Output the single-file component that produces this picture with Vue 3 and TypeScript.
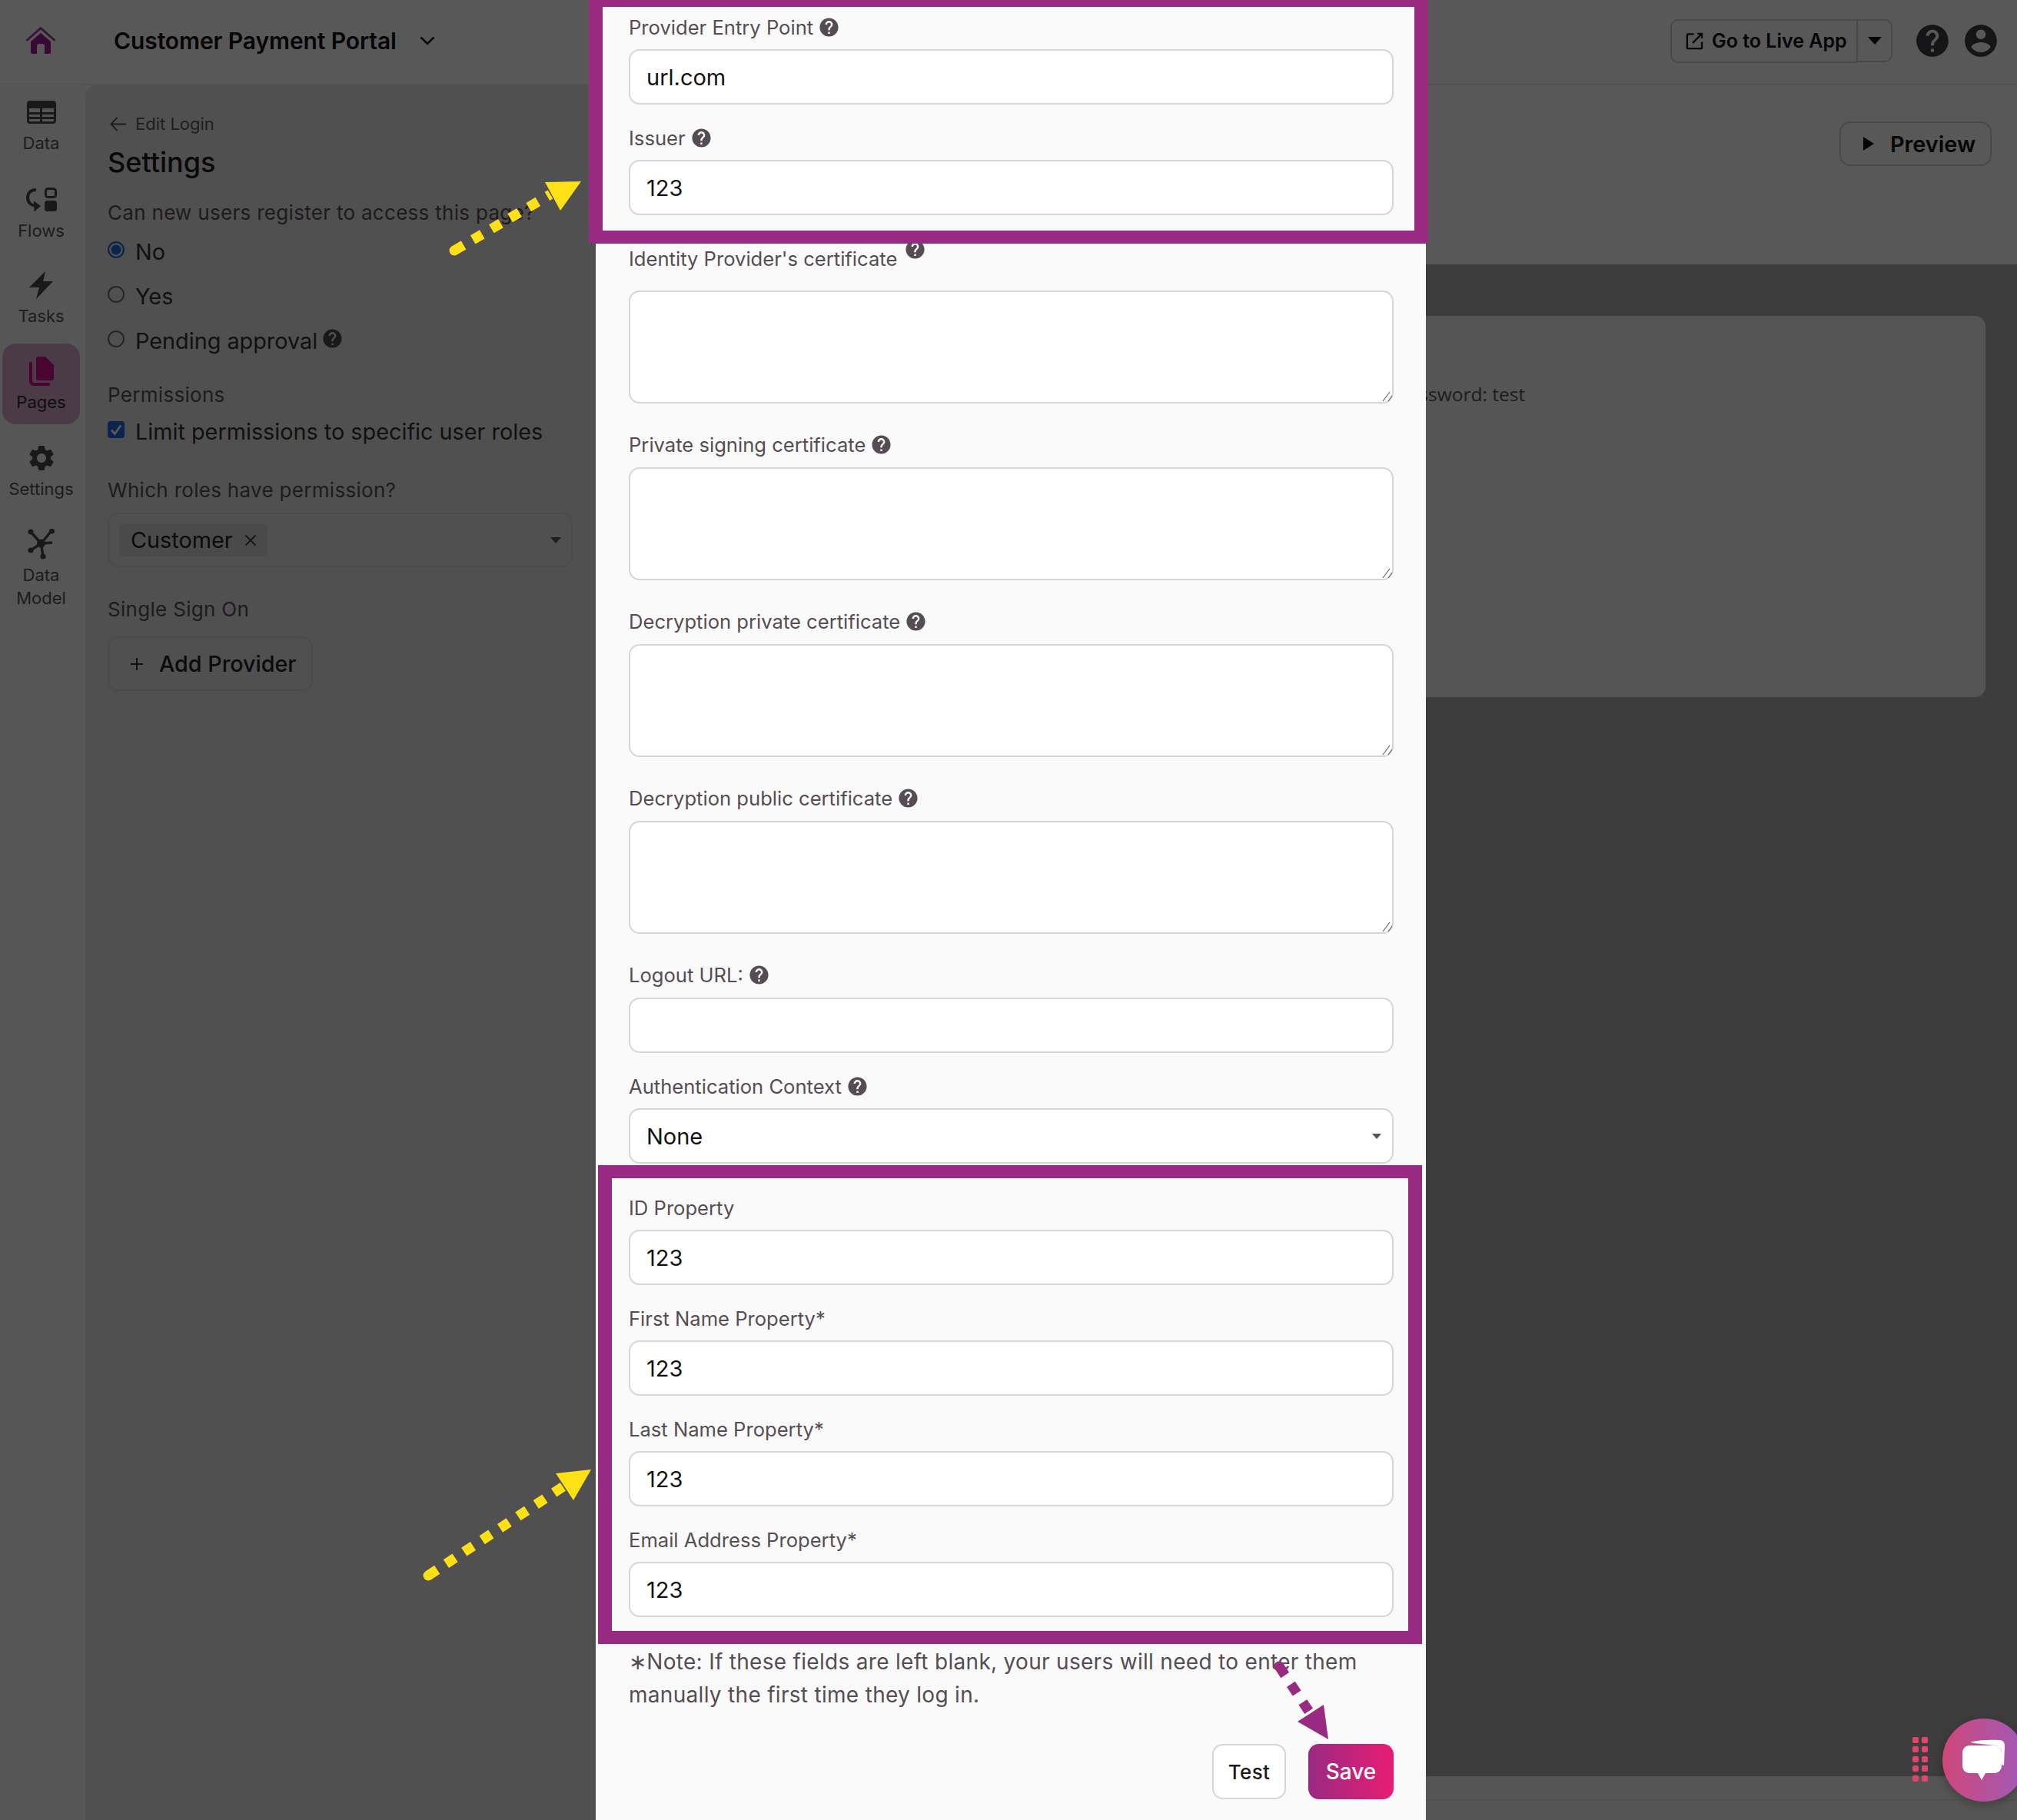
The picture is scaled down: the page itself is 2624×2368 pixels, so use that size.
<script setup lang="ts">
interface Field {
  label: string
  kind: 'input' | 'area' | 'select'
  value?: string
  help?: boolean
  cls?: string
  raised?: boolean
}
const fields: Field[] = [
  { label: 'Provider Entry Point', kind: 'input', value: 'url.com', help: true },
  { label: 'Issuer', kind: 'input', value: '123', help: true },
  { label: "Identity Provider's certificate", kind: 'area', help: true, cls: 'first-tall', raised: true },
  { label: 'Private signing certificate', kind: 'area', help: true, cls: 'tall' },
  { label: 'Decryption private certificate', kind: 'area', help: true, cls: 'tall' },
  { label: 'Decryption public certificate', kind: 'area', help: true, cls: 'tall' },
  { label: 'Logout URL:', kind: 'input', value: '', help: true, cls: 'tall' },
  { label: 'Authentication Context', kind: 'select', value: 'None', help: true },
  { label: 'ID Property', kind: 'input', value: '123', cls: 'after-select' },
  { label: 'First Name Property*', kind: 'input', value: '123' },
  { label: 'Last Name Property*', kind: 'input', value: '123' },
  { label: 'Email Address Property*', kind: 'input', value: '123' },
]
const helpPath = 'M12 2C6.48 2 2 6.48 2 12s4.48 10 10 10 10-4.48 10-10S17.52 2 12 2zm1 17h-2v-2h2v2zm2.07-7.75l-.9.92C13.45 12.9 13 13.5 13 15h-2v-.5c0-1.1.45-2.1 1.17-2.83l1.24-1.26c.37-.36.59-.86.59-1.41 0-1.1-.9-2-2-2s-2 .9-2 2H8c0-2.21 1.79-4 4-4s4 1.79 4 4c0 .88-.36 1.68-.93 2.25z'
const gearPath = 'M19.14 12.94c.04-.3.06-.61.06-.94 0-.32-.02-.64-.07-.94l2.03-1.58c.18-.14.23-.41.12-.61l-1.92-3.32c-.12-.22-.37-.29-.59-.22l-2.39.96c-.5-.38-1.03-.7-1.62-.94l-.36-2.54c-.04-.24-.24-.41-.48-.41h-3.84c-.24 0-.43.17-.47.41l-.36 2.54c-.59.24-1.13.57-1.62.94l-2.39-.96c-.22-.08-.47 0-.59.22L2.74 8.87c-.12.21-.08.47.12.61l2.03 1.58c-.05.3-.09.63-.09.94s.02.64.07.94l-2.03 1.58c-.18.14-.23.41-.12.61l1.92 3.32c.12.22.37.29.59.22l2.39-.96c.5.38 1.03.7 1.62.94l.36 2.54c.05.24.24.41.48.41h3.84c.24 0 .44-.17.47-.41l.36-2.54c.59-.24 1.13-.56 1.62-.94l2.39.96c.22.08.47 0 .59-.22l1.92-3.32c.12-.22.07-.47-.12-.61l-2.01-1.58zM12 15.6c-1.98 0-3.6-1.62-3.6-3.6s1.62-3.6 3.6-3.6 3.6 1.62 3.6 3.6-1.62 3.6-3.6 3.6z'
const accountPath = 'M12 2C6.48 2 2 6.48 2 12s4.48 10 10 10 10-4.48 10-10S17.52 2 12 2zm0 3c1.66 0 3 1.34 3 3s-1.34 3-3 3-3-1.34-3-3 1.34-3 3-3zm0 14.2c-2.5 0-4.71-1.28-6-3.22.03-1.99 4-3.08 6-3.08 1.99 0 5.97 1.09 6 3.08-1.29 1.94-3.5 3.22-6 3.22z'
const dots = Array.from({ length: 10 })
</script>

<template>
  <div class="app">
    <header class="topbar">
      <svg class="logo" viewBox="0 0 38 36">
        <path class="logo-roof" d="M1.5 17 19 1.5 36.5 17" />
        <path class="logo-body" d="M6 19 19 8l13 11v14a2 2 0 0 1-2 2h-6V25a3 3 0 0 0-3-3h-4a3 3 0 0 0-3 3v10H8a2 2 0 0 1-2-2Z" />
      </svg>
      <div class="app-title">Customer Payment Portal</div>
      <svg class="title-chevron" viewBox="0 0 20 12"><path d="M1.5 1.5 10 10l8.5-8.5" /></svg>
      <div class="top-right">
        <div class="live-group">
          <div class="live-btn">
            <svg class="ext-icon" viewBox="0 0 24 24"><path d="M11 2.5H3.5a1.5 1.5 0 0 0-1.5 1.5v16.500a1.500 1.500 0 0 0 1.500 1.500h17a1.500 1.500 0 0 0 1.500-1.500V13M9.500 14.500 22 2M16 2h6v6" /></svg>
            <span>Go to Live App</span>
          </div>
          <div class="live-caret"><i class="tri-down"></i></div>
        </div>
        <svg class="top-icon" viewBox="0 0 24 24"><path :d="helpPath" /></svg>
        <svg class="top-icon" viewBox="0 0 24 24"><path :d="accountPath" /></svg>
      </div>
    </header>

    <div class="body">
      <nav class="rail">
        <div class="rail-item">
          <div class="rail-icon">
            <svg width="38" height="30" viewBox="0 0 38 30"><path class="ic" fill-rule="evenodd" d="M4 0h30a4 4 0 0 1 4 4v22a4 4 0 0 1-4 4H4a4 4 0 0 1-4-4V4a4 4 0 0 1 4-4ZM3 10v5h14v-5Zm17 0v5h15v-5ZM3 18v3h14v-3Zm17 0v3h15v-3ZM3 24v2a1 1 0 0 0 1 1h13v-3Zm17 0v3h14a1 1 0 0 0 1-1v-2Z" /></svg>
          </div>
          <div class="rail-label">Data</div>
        </div>
        <div class="rail-item flows">
          <div class="rail-icon">
            <svg width="40" height="32" viewBox="0 0 40 32">
              <rect class="ic-line" x="25.500" y="1.500" width="13" height="11" rx="3" />
              <rect class="ic" x="24" y="17" width="16" height="14" rx="3.500" />
              <path class="ic-arc" d="M13 3C5 3 2 8 2 13c0 6 4 10 10 11" />
              <path class="ic" d="M10 17.500 19 24l-8.500 7.500Z" />
            </svg>
          </div>
          <div class="rail-label">Flows</div>
        </div>
        <div class="rail-item">
          <div class="rail-icon">
            <svg width="31" height="36" viewBox="0 0 31 36"><path class="ic" d="M21 0 0 21h13L9 36l22-23H18Z" /></svg>
          </div>
          <div class="rail-label">Tasks</div>
        </div>
        <div class="rail-item active">
          <div class="rail-icon">
            <svg width="32" height="38" viewBox="0 0 32 38">
              <path class="ic-active" d="M9 3a3 3 0 0 1 3-3h9l11 11v17a3 3 0 0 1-3 3H12a3 3 0 0 1-3-3Z" />
              <path class="ic-active-line" d="M2 9v23a4 4 0 0 0 4 4h19" />
            </svg>
          </div>
          <div class="rail-label">Pages</div>
        </div>
        <div class="rail-item">
          <div class="rail-icon">
            <svg width="40" height="40" viewBox="0 0 24 24"><path class="ic" :d="gearPath" /></svg>
          </div>
          <div class="rail-label">Settings</div>
        </div>
        <div class="rail-item">
          <div class="rail-icon">
            <svg width="38" height="40" viewBox="0 0 38 40">
              <path class="ic-thin" d="M5 4 18.500 19M32.500 2 18.500 19M5 28 18.500 19M21 36.500 18.500 19M33 18 18.500 19" />
              <circle class="ic" cx="18.500" cy="19" r="5.500" />
              <circle class="ic" cx="5" cy="4" r="3.500" />
              <circle class="ic" cx="32.500" cy="3" r="3.500" />
              <circle class="ic" cx="5" cy="28" r="3.500" />
              <circle class="ic" cx="21" cy="36" r="3.500" />
            </svg>
          </div>
          <div class="rail-label">Data<br />Model</div>
        </div>
      </nav>

      <aside class="panel">
        <div class="back">
          <svg class="back-arrow" viewBox="0 0 22 20"><path d="M10 1 1.500 10l8.500 9M2 10h20" /></svg>
          <span>Edit Login</span>
        </div>
        <h1 class="panel-title">Settings</h1>
        <div class="p-label q1">Can new users register to access this page?</div>
        <div class="radios">
          <div class="choice"><i class="radio on"></i><span>No</span></div>
          <div class="choice"><i class="radio"></i><span>Yes</span></div>
          <div class="choice">
            <i class="radio"></i><span>Pending approval</span>
            <svg class="p-help" viewBox="0 0 24 24"><path :d="helpPath" /></svg>
          </div>
        </div>
        <div class="p-label q2">Permissions</div>
        <div class="choice check-row">
          <i class="check"><svg viewBox="0 0 20 20"><path d="M4.500 10.500 8.500 15l7-10" /></svg></i>
          <span>Limit permissions to specific user roles</span>
        </div>
        <div class="p-label q3">Which roles have permission?</div>
        <div class="multi">
          <div class="chip"><span>Customer</span><svg viewBox="0 0 16 16"><path d="M1.500 1.500 14.500 14.500M14.500 1.500 1.500 14.500" /></svg></div>
          <i class="tri-small"></i>
        </div>
        <div class="p-label q4">Single Sign On</div>
        <div class="add-btn">
          <svg viewBox="0 0 18 18"><path d="M9 1v16M1 9h16" /></svg>
          <span>Add Provider</span>
        </div>
      </aside>

      <main class="stage">
        <div class="stage-head">
          <div class="preview-btn"><i class="tri-right"></i><span>Preview</span></div>
        </div>
        <div class="canvas">
          <div class="card"><p class="card-text">Password: test</p></div>
        </div>
        <div class="stage-foot"></div>
      </main>
    </div>

    <div class="scrim"></div>

    <section class="modal">
      <div v-for="f in fields" :key="f.label" class="field" :class="f.cls">
        <div class="label">
          <span>{{ f.label }}</span>
          <svg v-if="f.help" class="help" :class="{ raised: f.raised }" viewBox="0 0 24 24"><path :d="helpPath" /></svg>
        </div>
        <div v-if="f.kind === 'area'" class="area-wrap">
          <textarea class="area"></textarea>
          <svg class="resizer" viewBox="0 0 14 14"><path d="M1 13 10 1M8 13 13 6" /></svg>
        </div>
        <div v-else class="input">
          <span>{{ f.value }}</span>
          <i v-if="f.kind === 'select'" class="tri-select"></i>
        </div>
      </div>
      <p class="note">∗Note: If these fields are left blank, your users will need to enter them manually the first time they log in.</p>
      <div class="actions">
        <div class="btn test">Test</div>
        <div class="btn save">Save</div>
      </div>
    </section>

    <div class="mark mark-top"></div>
    <div class="mark mark-bottom"></div>

    <svg class="arrows" viewBox="0 0 2624 2368">
      <g class="yellow">
        <circle class="cap" cx="591" cy="326" r="6.500" />
        <path class="dash" d="M591 326 716 253" />
        <path class="head" d="M756 236 709 237 729 274Z" />
        <circle class="cap" cx="557" cy="2050" r="6.500" />
        <path class="dash" d="M557 2050 742 1928" />
        <path class="head" d="M769 1912 723 1917 746 1952Z" />
      </g>
      <g class="purple">
        <circle class="cap" cx="1664" cy="2168" r="6.500" />
        <path class="dash" d="M1664 2168 1705 2230" />
        <path class="head" d="M1728 2263 1722 2218 1688 2240Z" />
      </g>
    </svg>

    <div class="grip"><i v-for="(_, n) in dots" :key="n"></i></div>
    <div class="chat">
      <svg viewBox="0 0 56 54">
        <path d="M10 3.500C24 .500 38 .500 48 1c5 0 7 3 7 8l-1 25c-2 0-3-1-3-3V18c0-6-3-9-9-10L15 5Z" />
        <path d="M10 8h31c6 0 10 4 10 10v16c0 6-4 10-10 10H30l-5 9-5-9H10C4 44 0 40 0 34V18C0 12 4 8 10 8Z" />
      </svg>
    </div>
  </div>
</template>

<style>
html, body { margin: 0; background: #fff; }
</style>

<style scoped>
.app {
  position: relative;
  width: 2624px;
  height: 2368px;
  overflow: hidden;
  background: #fff;
  font-family: Inter, "Noto Sans", sans-serif;
  color: #222;
  display: flex;
  flex-direction: column;
}
i { display: block; font-style: normal; }

/* top bar */
.topbar {
  height: 111px;
  flex: none;
  box-sizing: border-box;
  border-bottom: 2px solid #ececec;
  background: #fff;
  display: flex;
  align-items: center;
  padding: 0 26px 3px 34px;
}
.logo { width: 38px; height: 36px; flex: none; }
.logo-roof { fill: none; stroke: #a33aa6; stroke-width: 3; stroke-linecap: round; stroke-linejoin: round; }
.logo-body { fill: #a01a9e; }
.app-title { margin-left: 76px; font-size: 30px; font-weight: 600; letter-spacing: -.1px; color: #111; white-space: nowrap; }
.title-chevron { width: 20px; height: 12px; margin-left: 30px; fill: none; stroke: #1a1a1a; stroke-width: 2.600; }
.top-right { margin-left: auto; display: flex; align-items: center; }
.live-group { display: flex; align-items: center; margin-right: 31px; }
.live-btn {
  box-sizing: border-box;
  width: 244px;
  height: 57px;
  border: 2px solid #d2d2d2;
  border-radius: 10px 0 0 10px;
  display: flex;
  align-items: center;
  padding-left: 18px;
  gap: 11px;
  font-size: 25px;
  font-weight: 600;
  color: #111;
  white-space: nowrap;
}
.ext-icon { width: 23px; height: 23px; flex: none; fill: none; stroke: #111; stroke-width: 2.400; }
.live-caret {
  box-sizing: border-box;
  width: 45px;
  height: 56px;
  border: 2px solid #d2d2d2;
  border-left: 0;
  border-radius: 0 10px 10px 0;
  display: flex;
  align-items: center;
  justify-content: center;
}
.tri-down { width: 0; height: 0; border: 9px solid transparent; border-top: 10px solid #111; border-bottom: 0; }
.top-icon { width: 50px; height: 50px; margin: 0 -4px; fill: #3f3b40; flex: none; }
.top-icon + .top-icon { margin-left: 17px; }

.body { flex: 1; display: flex; min-height: 0; }

/* rail */
.rail {
  width: 111px;
  flex: none;
  background: #f8f8f8;
  margin-top: -1px;
  padding: 0 7px 0 3px;
  box-sizing: border-box;
  display: flex;
  flex-direction: column;
  gap: 7.400px;
  position: relative;
}
.rail-item {
  height: 105px;
  box-sizing: border-box;
  padding-top: 16px;
  border-radius: 18px;
  text-align: center;
}
.rail-item.flows { padding-top: 18px; }
.rail-item.active { background: #d8aacf; }
.rail-icon { height: 40px; margin-bottom: 5px; display: flex; align-items: center; justify-content: center; }
.rail-label { font-size: 22px; line-height: 30px; color: #555; white-space: nowrap; }
.active .rail-label { color: #2a2a2a; }
.ic { fill: #4a474c; }
.ic-line { fill: none; stroke: #4a474c; stroke-width: 3; }
.ic-arc { fill: none; stroke: #4a474c; stroke-width: 4; }
.ic-thin { fill: none; stroke: #4a474c; stroke-width: 3.400; }
.ic-active { fill: #d1108a; }
.ic-active-line { fill: none; stroke: #d1108a; stroke-width: 4; stroke-linecap: round; }

/* left panel */
.panel {
  width: 664px;
  flex: none;
  box-sizing: border-box;
  background: #e8e8e8;
  border-top-left-radius: 14px;
  padding: 35px 30px 0 29px;
}
.back { display: flex; align-items: center; height: 30px; gap: 12px; padding-left: 3px; font-size: 22px; color: #5a5a5a; }
.back-arrow { width: 21px; height: 19px; fill: none; stroke: #555; stroke-width: 2; }
.panel-title { margin: 10px 0 0; font-size: 36px; line-height: 50px; font-weight: 500; color: #1a1a1a; }
.p-label { font-size: 26px; line-height: 30px; color: #5a5056; letter-spacing: .3px; white-space: nowrap; }
.q1 { margin-top: 26px; }
.q2 { margin-top: 35px; }
.q3 { margin-top: 41.500px; }
.q4 { margin-top: 40px; }
.radios { margin-top: 15.500px; display: flex; flex-direction: column; gap: 18px; }
.choice { height: 40px; display: flex; align-items: center; font-size: 28.800px; color: #333; white-space: nowrap; }
.radio {
  width: 22px;
  height: 22px;
  box-sizing: border-box;
  border-radius: 50%;
  border: 2px solid #6e6e6e;
  margin-right: 14px;
  flex: none;
  position: relative;
  top: -3px;
}
.radio.on { border: 2px solid #1f6ae0; background: #1f6ae0; box-shadow: inset 0 0 0 2.500px #e8e8e8; }
.p-help { width: 29px; height: 29px; margin: -6px 0 0 5px; fill: #4a474c; }
.check-row { margin-top: 13px; }
.check {
  width: 22px;
  height: 22px;
  border-radius: 4px;
  background: #1f6ae0;
  margin-right: 14px;
  flex: none;
  position: relative;
  top: -3px;
}
.check svg { display: block; width: 22px; height: 22px; fill: none; stroke: #fff; stroke-width: 2.600; }
.multi {
  margin-top: 14px;
  width: 605px;
  height: 71px;
  box-sizing: border-box;
  border: 2px solid #d8d8d8;
  border-radius: 14px;
  display: flex;
  align-items: center;
  justify-content: space-between;
  padding: 0 13px;
}
.chip {
  height: 43px;
  width: 193px;
  box-sizing: border-box;
  padding: 0 14px 0 15px;
  border-radius: 6px;
  background: #d6d6d6;
  display: flex;
  align-items: center;
  justify-content: space-between;
  font-size: 28.800px;
  color: #222;
}
.chip svg { width: 16px; height: 16px; fill: none; stroke: #444; stroke-width: 1.800; }
.tri-small { width: 0; height: 0; border: 7px solid transparent; border-top: 8px solid #48596a; border-bottom: 0; }
.add-btn {
  margin-top: 20px;
  width: 267px;
  height: 71px;
  box-sizing: border-box;
  border: 2px solid #d8d8d8;
  border-radius: 14px;
  display: flex;
  align-items: center;
  padding-left: 27px;
  gap: 20px;
  font-size: 28.700px;
  font-weight: 500;
  color: #222;
  white-space: nowrap;
}
.add-btn svg { width: 18px; height: 18px; fill: none; stroke: #333; stroke-width: 2; flex: none; }

/* right stage */
.stage { flex: 1; display: flex; flex-direction: column; min-width: 0; }
.stage-head {
  height: 233px;
  flex: none;
  box-sizing: border-box;
  background: #fff;
  display: flex;
  justify-content: flex-end;
  padding: 47px 33px 0 0;
}
.preview-btn {
  box-sizing: border-box;
  width: 198px;
  height: 58px;
  border: 2px solid #d2d2d2;
  border-radius: 14px;
  display: flex;
  align-items: center;
  padding-left: 29px;
  gap: 21px;
  font-size: 28.800px;
  font-weight: 600;
  color: #111;
}
.tri-right { width: 0; height: 0; border: 9.500px solid transparent; border-left: 14px solid #111; border-right: 0; }
.canvas { flex: 1; background: #b1b1b1; padding: 67px 41px 0 0; box-sizing: border-box; }
.card {
  height: 496px;
  margin-left: 40px;
  border-radius: 14px;
  background: #f7f7f7;
  padding: 0 0 0 1003px;
  box-sizing: border-box;
}
.card-text { margin: 0; padding-top: 84px; font-family: "Open Sans", sans-serif; font-size: 24.500px; line-height: 36px; color: #555; white-space: nowrap; }
.stage-foot {
  height: 56px;
  flex: none;
  background: linear-gradient(#f6f6f6 0 29px, #eaeaea 29px 31px, #f6f6f6 31px);
  border-top: 1px solid #eee;
}

.scrim { position: absolute; inset: 0; background: rgba(0, 0, 0, .655); }

/* modal */
.modal {
  position: absolute;
  left: 775px;
  top: 0;
  width: 1080px;
  height: 2368px;
  box-sizing: border-box;
  background: #fafafa;
  padding: 20px 42px 0 43px;
}
.field { margin-top: 28px; }
.field:first-child { margin-top: 0; }
.label {
  display: flex;
  align-items: center;
  height: 30px;
  margin-bottom: 14px;
  font-size: 25.600px;
  color: #564d54;
  white-space: nowrap;
}
.help { width: 29px; height: 29px; margin-left: 6px; fill: #564d54; flex: none; }
.help.raised { margin-left: 9px; position: relative; top: -12px; }
.tall { margin-top: 38px; }
.tall .label { margin-bottom: 15px; }
.first-tall { margin-top: 41px; }
.first-tall .label { margin-bottom: 27px; }
.after-select { margin-top: 42px; }
.input, .area {
  display: block;
  width: 100%;
  box-sizing: border-box;
  border: 2px solid #d6d6d6;
  border-radius: 14px;
  background: #fff;
}
.input {
  height: 72px;
  display: flex;
  align-items: center;
  justify-content: space-between;
  padding: 0 14px 0 21px;
  font-size: 29px;
  color: #111;
}
.area-wrap { position: relative; height: 147px; }
.area { height: 147px; margin: 0; padding: 0; resize: none; outline: none; }
.resizer { position: absolute; right: 1px; bottom: 2px; width: 14px; height: 14px; fill: none; stroke: #666; stroke-width: 1.200; }
.tri-select { width: 0; height: 0; border: 6px solid transparent; border-top: 7px solid #48596a; border-bottom: 0; }
.note { margin: 37px 0 0; font-size: 28px; letter-spacing: .3px; line-height: 43px; color: #564d54; }
.actions { margin-top: 42px; display: flex; justify-content: flex-end; gap: 29px; }
.btn {
  height: 72px;
  box-sizing: border-box;
  border-radius: 14px;
  display: flex;
  align-items: center;
  justify-content: center;
  font-size: 28px;
  font-weight: 500;
}
.test { width: 96px; background: #fff; border: 2px solid #d6d6d6; color: #1a1a1a; font-size: 26px; letter-spacing: .3px; }
.save { width: 111px; background: linear-gradient(90deg, #992a81, #ea1c74); color: #fff; }

/* annotations */
.mark { position: absolute; box-sizing: border-box; border: 18px solid #992a81; pointer-events: none; }
.mark-top { left: 766px; top: -9px; width: 1092px; height: 326px; border-bottom-width: 17px; }
.mark-bottom { left: 778px; top: 1516px; width: 1072px; height: 623px; border-top-width: 17px; border-bottom-width: 17px; }
.arrows { position: absolute; inset: 0; width: 2624px; height: 2368px; pointer-events: none; }
.dash { fill: none; stroke-width: 13; stroke-dasharray: 14 14; }
.yellow .dash { stroke: #fde015; }
.yellow .head, .yellow .cap { fill: #fde015; }
.purple .dash { stroke: #992a81; }
.purple .head, .purple .cap { fill: #992a81; }

.grip {
  position: absolute;
  left: 2488px;
  top: 2260px;
  display: grid;
  grid-template-columns: 8px 8px;
  grid-auto-rows: 8px;
  gap: 4.400px 4.400px;
}
.grip i { background: #e0456f; border-radius: 2px; }
.chat {
  position: absolute;
  left: 2527px;
  top: 2236px;
  width: 108px;
  height: 108px;
  border-radius: 50%;
  background: linear-gradient(90deg, #cf477a, #a05ab8);
  box-shadow: 0 4px 14px rgba(0, 0, 0, .25);
}
.chat svg { position: absolute; left: 26px; top: 27px; width: 56px; height: 54px; fill: #fff; }
</style>
